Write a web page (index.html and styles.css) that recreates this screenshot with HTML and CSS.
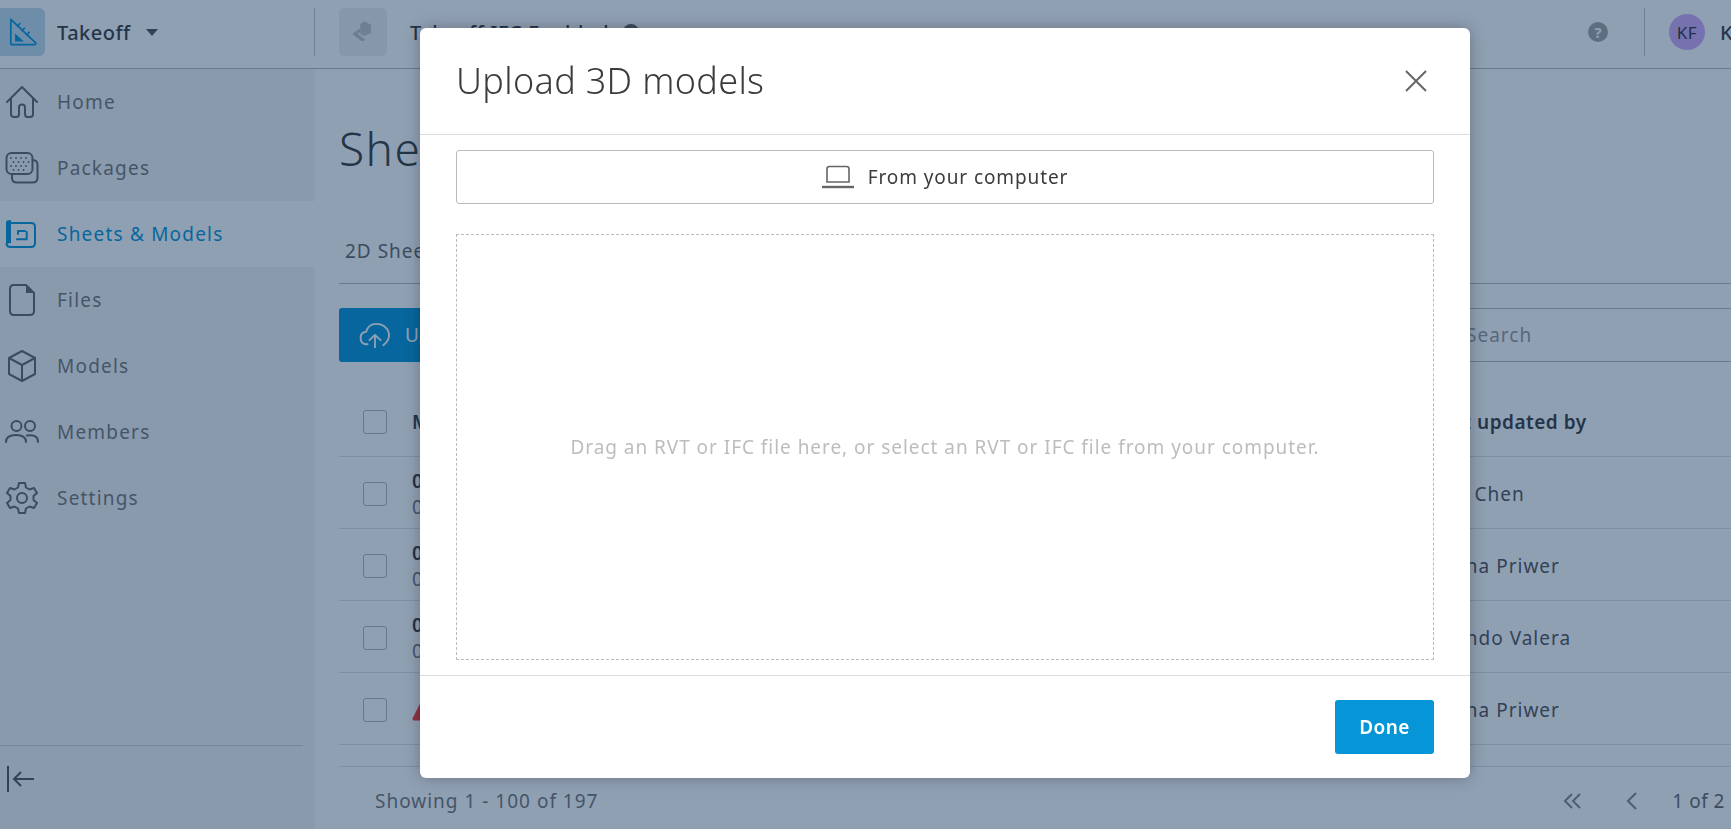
FILE: index.html
```html
<!DOCTYPE html>
<html lang="en">
<head>
<meta charset="utf-8">
<title>Upload 3D models</title>
<link rel="stylesheet" href="styles.css">
</head>
<body>
<div class="app">
  <header class="topbar">
    <div class="product">
      <div class="logo-tile">
        <svg class="logo" viewBox="0 0 32 32" fill="none" stroke="#0696d7" stroke-width="1.8" stroke-linejoin="round" stroke-linecap="round"><path d="M3 2.500 29.500 27.500Q30 29.500 28 29.500H4.500Q3 29.500 3 28Z"/><path d="M10 9.500 12.500 7M15 14.500 17.500 12M20 19 22.500 16.500"/><path d="M7.500 17.500 17 26H7.500Z" fill="#0696d7" stroke="none"/></svg>
      </div>
      <span class="product-name">Takeoff</span>
      <span class="caret"></span>
    </div>
    <div class="project">
      <div class="project-tile">
        <svg viewBox="0 0 24 24" class="project-icon"><path d="M13 4 18 6.500V12.500L13 15 10 13.500V6Z" fill="#c4c4c4"/><path d="M9.500 9.500 4 13.500 11 19 14 18 8 13.500 10.500 11.500Z" fill="#c0c0c0"/></svg>
      </div>
      <span class="project-name">Takeoff IFC Enabled</span>
      <span class="project-dot"></span>
    </div>
    <div class="account">
      <span class="help">?</span>
      <span class="account-sep"></span>
      <span class="avatar">KF</span>
      <span class="user-name">Kevin F</span>
    </div>
  </header>
  <div class="body">
    <nav class="sidebar">
      <a class="nav-item"><svg viewBox="0 0 34 34" class="nav-icon"><path d="M2 17 17 2 32 17M6 13.500V29Q6 32 9 32H11.500Q14 32 14 29V22Q14 19.500 17 19.500T20 22V29Q20 32 22.500 32H25Q28 32 28 29V13.500"/></svg><span>Home</span></a>
      <a class="nav-item"><svg viewBox="0 0 34 34" class="nav-icon"><rect x="1.500" y="2" width="26" height="21" rx="5"/><path d="M7 23.500V27Q7 31.500 12 31.500H27.500Q32.500 31.500 32.500 27V14Q32.500 9 27.500 9"/><path class="dots" d="M6 7h.01M11 7h.01M16 7h.01M21 7h.01M8.500 11h.01M13.500 11h.01M18.500 11h.01M23.500 11h.01M6 15h.01M11 15h.01M16 15h.01M21 15h.01M8.500 19h.01M13.500 19h.01M18.500 19h.01"/></svg><span>Packages</span></a>
      <a class="nav-item active"><svg viewBox="0 0 34 34" class="nav-icon"><path d="M5 6H26Q30 6 30 10V26Q30 30 26 30H6Q2 30 1.500 27"/><path d="M1 5Q1 3 6 3V26Q2 26 1 29Z" class="fill"/><path d="M13 17V14H20M21.700 15V22.300H12"/></svg><span>Sheets &amp; Models</span></a>
      <a class="nav-item"><svg viewBox="0 0 34 34" class="nav-icon"><path d="M21 2H9Q5 2 5 6V28Q5 32 9 32H25Q29 32 29 28V10Z"/><path d="M21 2 29 10H21Z" class="fill"/></svg><span>Files</span></a>
      <a class="nav-item"><svg viewBox="0 0 34 34" class="nav-icon"><path d="M17 2 30 9V25L17 32 4 25V9ZM4 9 17 16 30 9M17 16V32"/></svg><span>Models</span></a>
      <a class="nav-item"><svg viewBox="0 0 34 34" class="nav-icon"><circle cx="11.500" cy="11" r="5"/><circle cx="25" cy="11" r="5"/><path d="M1 27Q1 20 11 20T21 27M22 20.500Q33 19 33 27"/></svg><span>Members</span></a>
      <a class="nav-item"><svg viewBox="0 0 34 34" class="nav-icon"><circle cx="17" cy="17" r="5"/><path d="M14 2H20L21 6.500 24.500 8.500 29 7 32 12 28.500 15V19L32 22 29 27 24.500 25.500 21 27.500 20 32H14L13 27.500 9.500 25.500 5 27 2 22 5.500 19V15L2 12 5 7 9.500 8.500 13 6.500Z"/></svg><span>Settings</span></a>
      <div class="collapse">
        <svg viewBox="0 0 30 30" class="collapse-icon"><path d="M2 2V28M28 15H9M15 8 8 15 15 22"/></svg>
      </div>
    </nav>
    <main class="main">
      <h1 class="page-title">Sheets &amp; Models</h1>
      <div class="tabs"><span class="tab">2D Sheets</span></div>
      <div class="toolbar">
        <button class="upload"><svg viewBox="0 0 34 28" class="cloud"><path d="M9 24H8Q1.500 24 1.500 17 1.500 11 7.500 10.500 10 2 18 2 29 2 32 12 33 20 26 25"/><path d="M17 28V14M11 19.500 17 14 23 19.500"/></svg><span>Upload</span></button>
        <div class="search">Search</div>
      </div>
      <div class="table">
        <div class="row head"><span class="check"></span><span class="name">Model name</span><span class="by">Last updated by</span></div>
        <div class="row"><span class="check"></span><div class="name"><div class="title">0</div><div class="sub">0</div></div><span class="by">Aaron Chen</span></div>
        <div class="row"><span class="check"></span><div class="name"><div class="title">0</div><div class="sub">0</div></div><span class="by">Johanna Priwer</span></div>
        <div class="row"><span class="check"></span><div class="name"><div class="title">0</div><div class="sub">0</div></div><span class="by">Fernando Valera</span></div>
        <div class="row"><span class="check"></span><div class="name"><svg viewBox="0 0 22 22" class="warn"><path d="M11 2 20 20H2Z" fill="#ff3835" stroke="#ff3835" stroke-linejoin="round" stroke-width="3"/></svg></div><span class="by">Johanna Priwer</span></div>
        <div class="row stub"></div>
      </div>
      <footer class="pager">
        <span class="showing">Showing 1 - 100 of 197</span>
        <svg viewBox="0 0 20 16" class="pg-first"><path d="M9 1 2 8 9 15M17 1 10 8 17 15"/></svg>
        <svg viewBox="0 0 12 18" class="pg-prev"><path d="M10 1 2 9 10 17"/></svg>
        <span class="pages">1 of 2</span>
      </footer>
    </main>
  </div>
</div>
<div class="backdrop"></div>
<section class="modal">
  <header class="modal-head">
    <h2 class="modal-title">Upload 3D models</h2>
    <svg viewBox="0 0 22 22" class="close"><path d="M1 1 21 21M21 1 1 21"/></svg>
  </header>
  <div class="modal-body">
    <button class="source"><svg viewBox="0 0 32 24" class="laptop"><path d="M5 17V4Q5 1.500 7.500 1.500H24.500Q27 1.500 27 4V17Z"/><path d="M0 22H32" class="thick"/></svg><span>From your computer</span></button>
    <div class="drop">Drag an RVT or IFC file here, or select an RVT or IFC file from your computer.</div>
  </div>
  <footer class="modal-foot"><button class="done">Done</button></footer>
</section>
</body>
</html>
```
FILE: styles.css
```css
* { box-sizing: border-box; }
html, body { margin: 0; height: 100%; overflow: hidden; }
body { font-family: "Noto Sans", sans-serif; font-size: 19px; letter-spacing: 1px; color: #3c3c3c; background: #fff; }
button { font: inherit; letter-spacing: inherit; }

.app { display: flex; flex-direction: column; width: 1731px; height: 829px; }
.topbar { display: flex; height: 69px; flex: none; padding-top: 8px; border-bottom: 1px solid #b9b9b9; background: #fff; }
.product { display: flex; width: 315px; height: 48px; align-items: center; border-right: 1px solid #c8c8c8; }
.logo-tile { display: flex; width: 45px; height: 48px; align-items: center; justify-content: center; border-radius: 0 6px 6px 0; background: #bfdcec; }
.logo { width: 30px; height: 30px; }
.product-name { margin-left: 12px; font-size: 20px; font-weight: 500; letter-spacing: .5px; }
.caret { margin-left: 15px; border: 6px solid transparent; border-top: 7px solid #555; border-bottom: 0; }
.project { display: flex; flex: 1; height: 48px; align-items: center; padding-left: 24px; }
.project-tile { display: flex; width: 48px; height: 48px; align-items: center; justify-content: center; border-radius: 6px; background: #eee; }
.project-icon { width: 32px; height: 32px; }
.project-name { margin-left: 23px; font-size: 20px; font-weight: 500; letter-spacing: .6px; }
.project-dot { width: 16px; height: 16px; margin-left: 14px; border-radius: 50%; background: #666; }
.account { display: flex; width: 301px; height: 48px; align-items: center; padding-left: 158px; overflow: hidden; white-space: nowrap; }
.help { display: flex; width: 20px; height: 20px; flex: none; align-items: center; justify-content: center; border-radius: 50%; background: #a5a5a5; color: #fff; font-size: 15px; font-weight: 700; letter-spacing: 0; }
.account-sep { width: 1px; height: 48px; flex: none; margin-left: 36px; background: #c8c8c8; }
.avatar { display: flex; width: 36px; height: 36px; flex: none; align-items: center; justify-content: center; margin-left: 24px; border-radius: 50%; background: #d0abf9; color: #333; font-size: 17px; letter-spacing: .5px; }
.user-name { margin-left: 15px; font-size: 20px; font-weight: 500; letter-spacing: .5px; }

.body { display: flex; flex: 1; min-height: 0; }
.sidebar { display: flex; width: 315px; flex: none; flex-direction: column; padding-top: 0; background: #f5f5f5; }
.nav-item { display: flex; height: 66px; flex: none; align-items: center; gap: 18px; padding-left: 5px; color: #777; letter-spacing: 1.200px; }
.nav-item.active { background: #fff; color: #0696d7; }
.nav-icon { width: 34px; height: 34px; fill: none; stroke: #666; stroke-width: 2; stroke-linecap: round; stroke-linejoin: round; flex: none; }
.nav-icon .fill { fill: #666; stroke: none; }
.nav-icon .dots { stroke-width: 1.800; }
.active .nav-icon { stroke: #0696d7; }
.active .nav-icon .fill { fill: #0696d7; }
.collapse { display: flex; height: 84px; margin-top: auto; margin-right: 12px; align-items: flex-start; padding: 18px 0 0 6px; border-top: 1px solid #d0d0d0; }
.collapse-icon { width: 30px; height: 30px; fill: none; stroke: #555; stroke-width: 2; }

.main { display: flex; flex: 1; min-width: 0; flex-direction: column; padding-left: 24px; background: #fff; }
.page-title { height: 150px; margin: 0; padding-top: 46px; font-size: 46px; font-weight: 300; line-height: 66px; letter-spacing: 1.500px; white-space: nowrap; }
.tabs { display: flex; height: 65px; align-items: flex-start; padding: 19px 0 0 6px; border-bottom: 1px solid #b9b9b9; color: #666; line-height: 26px; }
.toolbar { display: flex; height: 54px; flex: none; justify-content: space-between; margin-top: 24px; }
.upload { display: flex; width: 200px; align-items: center; gap: 14px; padding: 0 0 0 20px; border: 0; border-radius: 3px; background: #0696d7; color: #fff; }
.cloud { width: 32px; height: 26px; fill: none; stroke: #fff; stroke-width: 2; stroke-linecap: round; stroke-linejoin: round; }
.search { display: flex; width: 291px; align-items: center; padding-left: 26px; border-top: 1px solid #b9b9b9; border-bottom: 1px solid #b9b9b9; color: #999; }
.table { display: flex; flex-direction: column; margin-top: 24px; }
.row { display: grid; height: 72px; grid-template-columns: 49px 998px 1fr; align-items: center; padding: 2px 0 0 24px; border-bottom: 1px solid #e0e0e0; }
.head { height: 71px; font-weight: 600; letter-spacing: .5px; }
.stub { height: 22px; padding: 0; }
.check { width: 24px; height: 24px; border: 1px solid #b8b8b8; border-radius: 3px; background: #fff; }
.name { font-weight: 600; line-height: 26px; }
.title { font-weight: 600; }
.sub { font-weight: 400; color: #777; }
.warn { display: block; width: 22px; height: 22px; }
.by { white-space: nowrap; color: #555; font-weight: 400; }
.head .by { padding-left: 21px; font-weight: 600; color: #3c3c3c; }
.pager { display: flex; flex: 1; align-items: center; padding: 6px 6px 0 36px; color: #777; }
.showing { margin-right: auto; }
.pg-first, .pg-prev { fill: none; stroke: #888; stroke-width: 2; }
.pg-first { width: 20px; height: 16px; }
.pg-prev { width: 12px; height: 18px; margin-left: 43px; }
.pages { margin-left: 34px; color: #666; letter-spacing: .5px; }

.backdrop { position: fixed; inset: 0; background: rgba(8, 44, 86, .45); }
.modal { position: fixed; top: 28px; left: 420px; display: flex; width: 1050px; height: 750px; flex-direction: column; border-radius: 6px; background: #fff; box-shadow: 0 0 16px rgba(0, 0, 0, .28); }
.modal-head { display: flex; height: 107px; flex: none; align-items: center; justify-content: space-between; padding: 0 43px 1px 36px; border-bottom: 1px solid #ddd; }
.modal-title { margin: 0; font-size: 36px; font-weight: 300; letter-spacing: .33px; color: #3c3c3c; }
.close { width: 22px; height: 22px; fill: none; stroke: #666; stroke-width: 2; }
.modal-body { display: flex; flex: 1; min-height: 0; flex-direction: column; gap: 30px; padding: 15px 36px 15px; }
.source { display: flex; height: 54px; flex: none; align-items: center; justify-content: center; gap: 14px; padding: 0; border: 1px solid #bbb; border-radius: 3px; background: #fff; color: #3c3c3c; letter-spacing: .9px; }
.laptop { width: 32px; height: 24px; fill: none; stroke: #666; stroke-width: 1.600; }
.laptop .thick { stroke-width: 2.400; }
.drop { display: flex; flex: 1; align-items: center; justify-content: center; border: 1px dashed #bbb; color: #bdbdbd; letter-spacing: .96px; }
.modal-foot { display: flex; height: 103px; flex: none; justify-content: flex-end; padding: 24px 36px 0 0; border-top: 1px solid #ddd; }
.done { width: 99px; height: 54px; border: 0; border-radius: 3px; background: #0696d7; color: #fff; font-weight: 600; letter-spacing: .4px; }
```
